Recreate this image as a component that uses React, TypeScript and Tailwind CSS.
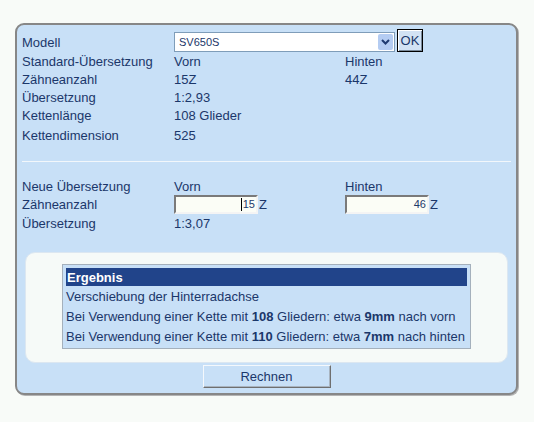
const font = "font-['Liberation_Sans',Arial,sans-serif]"

function Field({ value }: { value: string }) {
  return (
    <div className="flex items-center">
      <div className="flex h-[19px] w-[84px] items-center justify-end border-2 border-t-[#7a7a7a] border-l-[#7a7a7a] border-b-[#f4f4f4] border-r-[#f4f4f4] bg-[#fbfdf6] pr-[1px] text-[11px] text-[#1d3a6b]">
        {value === "15" && <span className="mr-[1px] h-[13px] w-px bg-black" />}
        {value}
      </div>
      <span className="ml-px">Z</span>
    </div>
  )
}

export default function App() {
  return (
    <div className={`min-h-[422px] bg-[#f8fbf8] pt-[23px] pl-[15px] text-[13px] leading-none text-[#1b376a] ${font}`}>
      <div className="w-[503px] rounded-[9px] border-2 border-[#878787] bg-[#c8e0f7] pt-[4px] pr-[5px] pb-[5px] pl-[5px] shadow-[1px_1px_0_#b4b4b4]">
        {/* Modellauswahl */}
        <div className="grid h-[23px] grid-cols-[152px_1fr]">
          <div className="flex h-[20px] items-center self-end">Modell</div>
          <div className="flex items-end">
            <div className="flex h-[20px] w-[221px] items-center border border-[#7f9db9] bg-white pl-[4px] text-[11px]">
              <span className="flex-1">SV650S</span>
              <span className="mr-px flex h-[16px] w-[15px] items-center justify-center rounded-[2px] bg-[#b4ccf2]">
                <svg width="9" height="6" viewBox="0 0 9 6">
                  <path d="M1 1l3.5 3.5L8 1" fill="none" stroke="#1f3a70" strokeWidth="2" />
                </svg>
              </span>
            </div>
            <button className="ml-[2px] flex h-[23px] w-[26px] items-center justify-center border border-black bg-[#d2e2f4] text-[13px] text-[#1b376a] shadow-[inset_1px_1px_0_#ffffff,inset_-1px_-1px_0_#7a8a9a]">
              OK
            </button>
          </div>
        </div>

        {/* Standard-Übersetzung */}
        <div className="grid grid-cols-[152px_171px_1fr]">
          <div className="flex h-[18px] items-center">Standard-Übersetzung</div>
          <div className="flex h-[18px] items-center">Vorn</div>
          <div className="flex h-[18px] items-center">Hinten</div>
          <div className="flex h-[18px] items-center">Zähneanzahl</div>
          <div className="flex h-[18px] items-center">15Z</div>
          <div className="flex h-[18px] items-center">44Z</div>
          <div className="flex h-[18px] items-center">Übersetzung</div>
          <div className="col-span-2 flex h-[18px] items-center">1:2,93</div>
          <div className="flex h-[18px] items-center">Kettenlänge</div>
          <div className="col-span-2 flex h-[18px] items-center">108 Glieder</div>
          <div className="mt-[2px] flex h-[18px] items-center">Kettendimension</div>
          <div className="col-span-2 mt-[2px] flex h-[18px] items-center">525</div>
        </div>

        <div className="mt-[17px] h-px bg-[#f2f7fb]" />

        {/* Neue Übersetzung */}
        <div className="mt-[15px] grid grid-cols-[152px_171px_1fr]">
          <div className="flex h-[18px] items-center">Neue Übersetzung</div>
          <div className="flex h-[18px] items-center">Vorn</div>
          <div className="flex h-[18px] items-center">Hinten</div>
          <div className="flex h-[19px] items-center">Zähneanzahl</div>
          <Field value="15" />
          <Field value="46" />
          <div className="flex h-[18px] items-center">Übersetzung</div>
          <div className="col-span-2 flex h-[18px] items-center">1:3,07</div>
        </div>

        {/* Ergebnis */}
        <div className="mx-[3px] mt-[20px] flex h-[111px] justify-center rounded-[10px] border border-[#dce7f1] bg-[#f6faf8] pt-[11px]">
          <div className="h-[85px] w-[409px] border border-[#a4b0bc] bg-[#c8e0f7] p-[3px]">
            <div className="flex h-[18px] items-center bg-[#21448a] pl-px font-bold text-white">Ergebnis</div>
            <div className="mt-[1px] flex h-[19px] items-center">Verschiebung der Hinterradachse</div>
            <div className="mt-[1px] flex h-[19px] items-center whitespace-pre">
              Bei Verwendung einer Kette mit <b>108</b> Gliedern: etwa <b>9mm</b> nach vorn
            </div>
            <div className="mt-[1px] flex h-[19px] items-center whitespace-pre">
              Bei Verwendung einer Kette mit <b>110</b> Gliedern: etwa <b>7mm</b> nach hinten
            </div>
          </div>
        </div>

        <div className="mt-[2px] flex justify-center">
          <button className="h-[23px] w-[128px] border border-t-[#f4f8fc] border-l-[#f4f8fc] border-b-[#6f6f6f] border-r-[#6f6f6f] bg-[#c8e0f7] text-[13px] text-[#1b376a] shadow-[inset_-1px_-1px_0_#a8b4c0]">
            Rechnen
          </button>
        </div>
      </div>
    </div>
  )
}
